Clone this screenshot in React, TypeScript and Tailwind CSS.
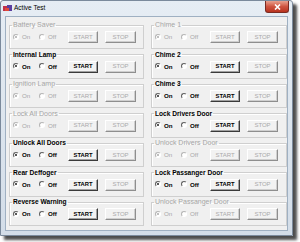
import React from "react";

type Group = { label: string; enabled: boolean };

const rows: [Group, Group][] = [
  [{ label: "Battery Saver", enabled: false }, { label: "Chime 1", enabled: false }],
  [{ label: "Internal Lamp", enabled: true }, { label: "Chime 2", enabled: true }],
  [{ label: "Ignition Lamp", enabled: false }, { label: "Chime 3", enabled: true }],
  [{ label: "Lock All Doors", enabled: false }, { label: "Lock Drivers Door", enabled: true }],
  [{ label: "Unlock All Doors", enabled: true }, { label: "Unlock Drivers Door", enabled: false }],
  [{ label: "Rear Deffoger", enabled: true }, { label: "Lock Passanger Door", enabled: true }],
  [{ label: "Reverse Warning", enabled: true }, { label: "Unlock Passanger Door", enabled: false }],
];

function Radio({ text, checked, enabled }: { text: string; checked: boolean; enabled: boolean }) {
  return (
    <span className={`flex items-center gap-[3px] ${enabled ? "font-bold text-black" : "text-[#a7a7a7]"}`}>
      <span
        className={`flex h-[6px] w-[6px] items-center justify-center rounded-full border border-r-white border-b-white bg-white ${
          enabled ? "border-t-[#5f5f5f] border-l-[#5f5f5f]" : "border-t-[#b5b5b5] border-l-[#b5b5b5]"
        }`}
      >
        {checked && <span className={`h-[2px] w-[2px] rounded-full ${enabled ? "bg-[#222]" : "bg-[#aaa]"}`} />}
      </span>
      {text}
    </span>
  );
}

function Button({ text, enabled, width }: { text: string; enabled: boolean; width: string }) {
  return (
    <div
      className={`${width} flex h-[12px] items-center justify-center border border-t-white border-l-white bg-[#f2f2f2] ${
        enabled
          ? "border-r-[#3a3a3a] border-b-[#3a3a3a] text-[5.8px] font-bold text-black shadow-[inset_-1px_-1px_0_#a0a0a0]"
          : "border-r-[#8e8e8e] border-b-[#8e8e8e] text-[6px] text-[#aaaaaa] shadow-[inset_-1px_-1px_0_#cfcfcf]"
      }`}
    >
      {text}
    </div>
  );
}

function GroupBox({ group }: { group: Group }) {
  const on = group.enabled;
  return (
    <fieldset className="h-[28px] border border-[#cfcfcf] shadow-[inset_1px_1px_0_#ffffff]">
      <legend
        className={`ml-[2px] px-[1px] leading-[8px] ${
          on ? "text-[6.6px] font-bold text-black" : "text-[7px] text-[#a5a5a5]"
        }`}
      >
        {group.label}
      </legend>
      <div className="mt-[2px] flex h-[12px] items-center pl-[3px] text-[6.2px]">
        <div className="w-[26px]">
          <Radio text="On" checked enabled={on} />
        </div>
        <div className="w-[29px]">
          <Radio text="Off" checked={false} enabled={on} />
        </div>
        <Button text="START" enabled={on} width="w-[30px]" />
        <div className="w-[7px]" />
        <Button text="STOP" enabled={false} width="w-[31px]" />
      </div>
    </fieldset>
  );
}

export default function App() {
  return (
    <div className="h-[242px] w-[300px] overflow-hidden bg-white font-['Liberation_Sans',Arial,sans-serif]">
      <div className="flex h-[236px] w-[293px] flex-col rounded-t-[3px] border border-[#7b8a9c] bg-gradient-to-b from-[#e6edf4] to-[#d3dde8] shadow-[4px_4px_3px_rgba(0,0,0,0.7)]">
        {/* title bar */}
        <div className="flex h-[15px] items-start justify-between">
          <div className="flex items-center gap-[2px] pl-[2px] pt-[3px]">
            <svg width="9" height="7" viewBox="0 0 9 7">
              <rect x="0" y="1" width="4" height="5" fill="#c0304a" />
              <rect x="4" y="0" width="5" height="6" fill="#5a3fa0" />
              <rect x="2" y="3" width="4" height="3" fill="#e04a3a" />
            </svg>
            <span className="text-[6.5px] leading-[8px] text-black">Active Test</span>
          </div>
          <div className="mr-[3px] flex h-[12px] w-[24px] items-center justify-center rounded-b-[3px] border border-t-0 border-[#7a2b22] bg-gradient-to-b from-[#e8a08e] via-[#cf5440] to-[#b8321e]">
            <svg width="7" height="6" viewBox="0 0 7 6">
              <path d="M1 0.5 L6 5.5 M6 0.5 L1 5.5" stroke="white" strokeWidth="1.6" />
            </svg>
          </div>
        </div>

        {/* client area */}
        <div className="mx-[4px] mb-[4px] flex-1 border border-[#9fb0c2] bg-[#f0f0f0] pl-[3px] pt-[4px]">
          <div className="grid grid-cols-[135px_136px] gap-x-[7px] gap-y-[1.5px]">
            {rows.map(([a, b]) => (
              <React.Fragment key={a.label}>
                <GroupBox group={a} />
                <GroupBox group={b} />
              </React.Fragment>
            ))}
          </div>
        </div>
      </div>
    </div>
  );
}
